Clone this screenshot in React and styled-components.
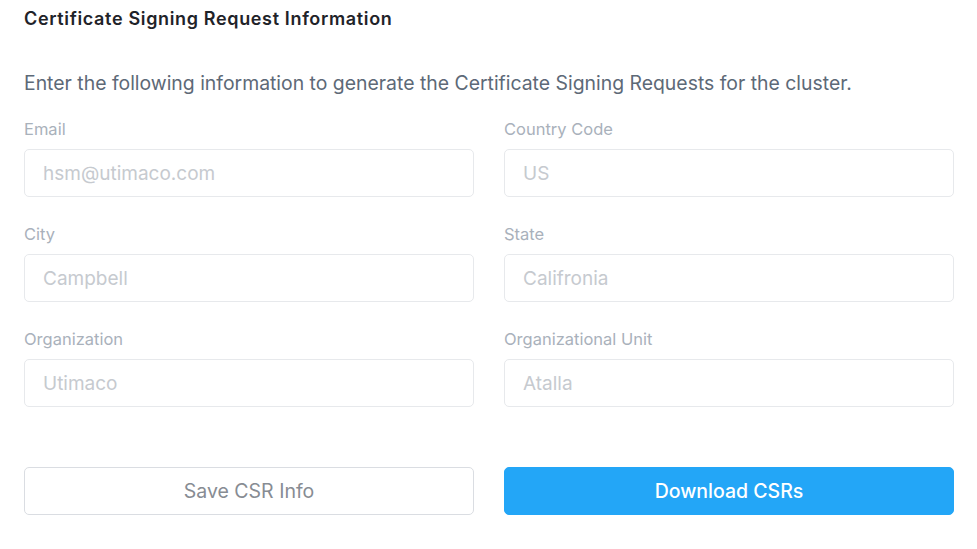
import React from "react";
import styled, { createGlobalStyle } from "styled-components";

const Global = createGlobalStyle`
  html, body { margin: 0; padding: 0; background: #ffffff; }
  body { font-family: Inter, "Open Sans", "Liberation Sans", sans-serif; }
  * { box-sizing: border-box; }
`;

const Page = styled.div`
  width: 977px;
  padding: 8px 23px 0 24px;
  display: flex;
  flex-direction: column;
`;

const Title = styled.h2`
  margin: 0;
  font-size: 18px;
  line-height: 22px;
  font-weight: 600;
  letter-spacing: 0.65px;
  color: #1f2329;
`;

const Description = styled.p`
  margin: 41px 0 0;
  font-size: 19.4px;
  line-height: 24px;
  color: #5d6977;
`;

const Grid = styled.div`
  margin-top: 24px;
  display: grid;
  grid-template-columns: 450px 450px;
  column-gap: 30px;
  row-gap: 27px;
`;

const Field = styled.label`
  display: flex;
  flex-direction: column;
  gap: 9px;
`;

const Label = styled.span`
  font-size: 16.5px;
  line-height: 21px;
  color: #a9b1bb;
`;

const Input = styled.input`
  height: 48px;
  width: 100%;
  border: 1px solid #e7e9ec;
  border-radius: 5px;
  padding: 0 18px;
  font-family: inherit;
  font-size: 19px;
  color: #333;
  background: #fff;
  outline: none;
  &::placeholder { color: #c6cacf; }
`;

const Actions = styled.div`
  margin-top: 60px;
  display: grid;
  grid-template-columns: 450px 450px;
  column-gap: 30px;
`;

const Button = styled.button`
  height: 48px;
  border-radius: 5px;
  font-family: inherit;
  font-size: 19.5px;
  cursor: pointer;
  border: 1px solid ${(p) => (p.$primary ? "#23a6f7" : "#dadde2")};
  background: ${(p) => (p.$primary ? "#23a6f7" : "#ffffff")};
  color: ${(p) => (p.$primary ? "#ffffff" : "#878c93")};
  font-weight: ${(p) => (p.$primary ? 500 : 400)};
`;

const fields = [
  ["Email", "hsm@utimaco.com"],
  ["Country Code", "US"],
  ["City", "Campbell"],
  ["State", "Califronia"],
  ["Organization", "Utimaco"],
  ["Organizational Unit", "Atalla"],
];

export default function App() {
  return (
    <>
      <Global />
      <Page>
        <Title>Certificate Signing Request Information</Title>
        <Description>
          Enter the following information to generate the Certificate Signing Requests for the cluster.
        </Description>
        <Grid>
          {fields.map(([label, ph]) => (
            <Field key={label}>
              <Label>{label}</Label>
              <Input placeholder={ph} />
            </Field>
          ))}
        </Grid>
        <Actions>
          <Button>Save CSR Info</Button>
          <Button $primary>Download CSRs</Button>
        </Actions>
      </Page>
    </>
  );
}
